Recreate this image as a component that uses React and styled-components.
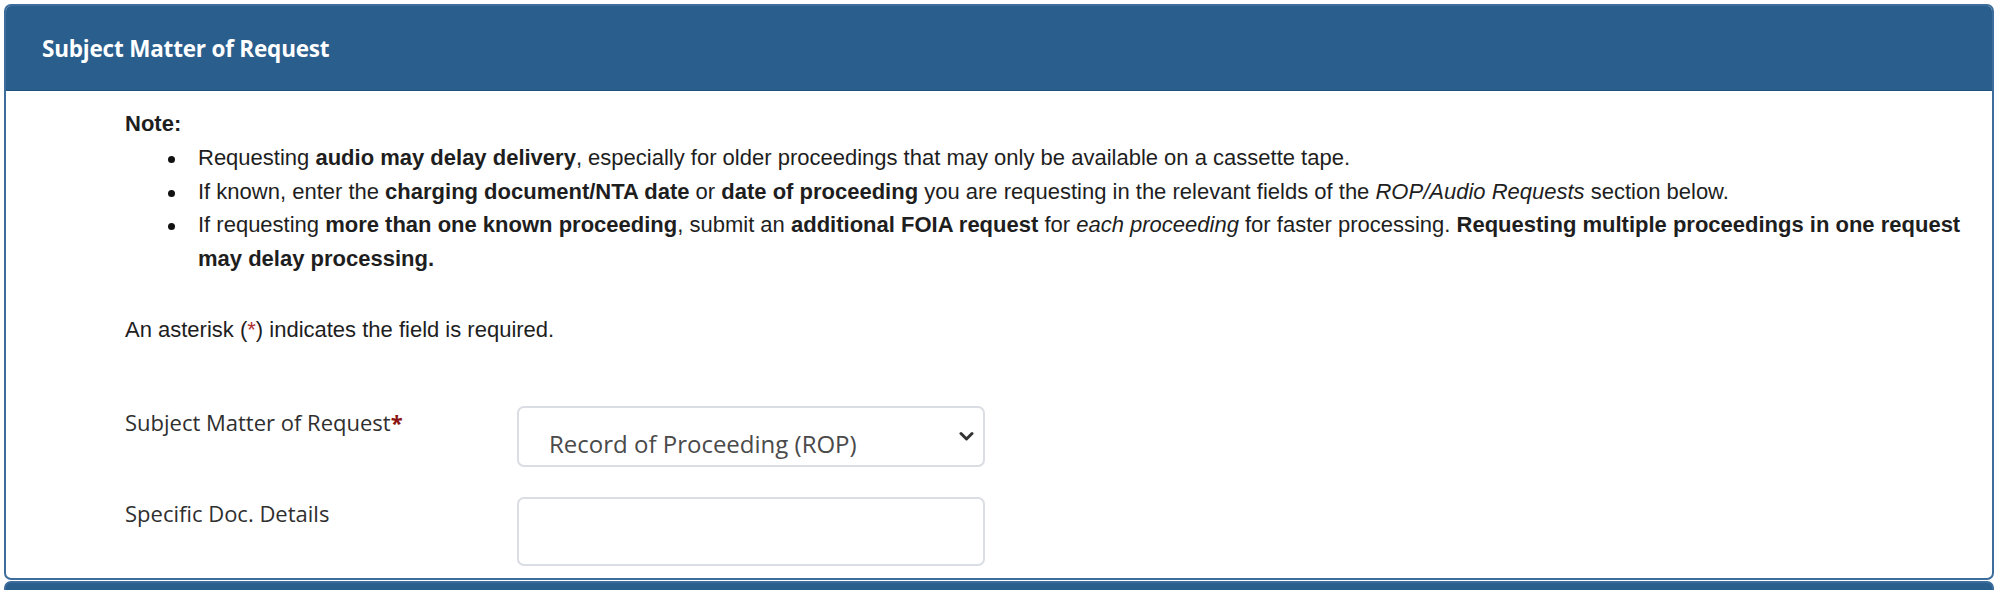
import React from 'react'
import { styled, createGlobalStyle } from 'styled-components'

const GlobalStyle = createGlobalStyle`
  html, body {
    margin: 0;
    padding: 0;
    background: #ffffff;
  }
  body {
    font-family: "Liberation Sans", Arial, sans-serif;
  }
`

const Page = styled.div`
  padding: 4px 6px 0 4px;
`

const Panel = styled.section`
  border: 2px solid #3c6d9c;
  border-radius: 7px;
  overflow: hidden;
  background: #ffffff;
`

const NextPanel = styled.section`
  margin-top: 1px;
  border: 2px solid #3c6d9c;
  border-radius: 7px 7px 0 0;
  background: #2a5e8d;
  height: 40px;
`

const PanelHeader = styled.div`
  background: #2a5e8d;
  height: 84px;
  display: flex;
  align-items: center;
  padding-left: 36px;
  border-bottom: 1px solid #21517d;
`

const PanelTitle = styled.h2`
  margin: 0;
  color: #ffffff;
  font-family: "Open Sans", "Noto Sans", sans-serif;
  font-size: 22.5px;
  font-weight: 700;
  letter-spacing: -0.2px;
`

const PanelBody = styled.div`
  padding: 16px 14px 12px 119px;
`

const NoteBlock = styled.div`
  font-size: 22px;
  line-height: 33.8px;
  color: #1e1e1e;
`

const NoteTitle = styled.div`
  font-weight: 700;
`

const NoteList = styled.ul`
  margin: 0;
  padding-left: 43px;
  list-style: none;
`

const NoteItem = styled.li`
  display: flex;
`

const Bullet = styled.span`
  flex: 0 0 30px;
  &::before {
    content: '';
    display: block;
    width: 7px;
    height: 7px;
    margin-top: 15px;
    border-radius: 50%;
    background: #111111;
  }
`

const NoteText = styled.span`
  flex: 1;
`

const Required = styled.p`
  margin: 37px 0 0;
  font-size: 22px;
  line-height: 34px;
  color: #1e1e1e;
`

const Star = styled.span`
  color: ${(p) => (p.$strong ? '#8b1010' : '#b03030')};
  font-weight: ${(p) => (p.$strong ? 700 : 400)};
`

const Form = styled.div`
  margin-top: 59px;
  display: grid;
  grid-template-columns: 392px 468px;
  row-gap: 30px;
  align-items: start;
`

const Label = styled.label`
  font-family: "Open Sans", "Noto Sans", sans-serif;
  font-size: 22px;
  line-height: 30px;
  color: #2f2f2f;
  padding-top: 1px;
`

const SelectWrap = styled.div`
  position: relative;
`

const Select = styled.select`
  appearance: none;
  width: 100%;
  height: 61px;
  box-sizing: border-box;
  border: 2px solid #dadde3;
  border-radius: 7px;
  background: #ffffff;
  padding: 14px 40px 0 30px;
  font-family: "Open Sans", "Noto Sans", sans-serif;
  font-size: 24px;
  color: #4a4a4a;
  outline: none;
`

const Chevron = styled.svg`
  position: absolute;
  right: 11px;
  top: 25px;
  width: 15px;
  height: 11px;
  pointer-events: none;
`

const TextInput = styled.input`
  width: 100%;
  height: 69px;
  box-sizing: border-box;
  border: 2px solid #dadde3;
  border-radius: 7px;
  background: #ffffff;
  padding: 0 30px;
  font-family: "Open Sans", "Noto Sans", sans-serif;
  font-size: 22px;
  outline: none;
`

const notes = [
  <>
    Requesting <b>audio may delay delivery</b>, especially for older proceedings
    that may only be available on a cassette tape.
  </>,
  <>
    If known, enter the <b>charging document/NTA date</b> or{' '}
    <b>date of proceeding</b> you are requesting in the relevant fields of the{' '}
    <i>ROP/Audio Requests</i> section below.
  </>,
  <>
    If requesting <b>more than one known proceeding</b>, submit an{' '}
    <b>additional FOIA request</b> for <i>each proceeding</i> for faster
    processing.{' '}
    <b>Requesting multiple proceedings in one request may delay processing.</b>
  </>,
]

function App() {
  return (
    <Page>
      <GlobalStyle />
      <Panel>
        <PanelHeader>
          <PanelTitle>Subject Matter of Request</PanelTitle>
        </PanelHeader>
        <PanelBody>
          <NoteBlock>
            <NoteTitle>Note:</NoteTitle>
            <NoteList>
              {notes.map((n, i) => (
                <NoteItem key={i}>
                  <Bullet />
                  <NoteText>{n}</NoteText>
                </NoteItem>
              ))}
            </NoteList>
          </NoteBlock>
          <Required>
            An asterisk (<Star>*</Star>) indicates the field is required.
          </Required>
          <Form>
            <Label htmlFor="subject">
              Subject Matter of Request<Star $strong>*</Star>
            </Label>
            <SelectWrap>
              <Select id="subject" defaultValue="rop">
                <option value="rop">Record of Proceeding (ROP)</option>
                <option value="audio">Audio</option>
                <option value="other">Other</option>
              </Select>
              <Chevron viewBox="0 0 15 11">
                <path
                  d="M2 2.5 L7.5 8 L13 2.5"
                  fill="none"
                  stroke="#333"
                  strokeWidth="3"
                  strokeLinecap="round"
                  strokeLinejoin="round"
                />
              </Chevron>
            </SelectWrap>
            <Label htmlFor="details">Specific Doc. Details</Label>
            <TextInput id="details" type="text" />
          </Form>
        </PanelBody>
      </Panel>
      <NextPanel />
    </Page>
  )
}

export default App
